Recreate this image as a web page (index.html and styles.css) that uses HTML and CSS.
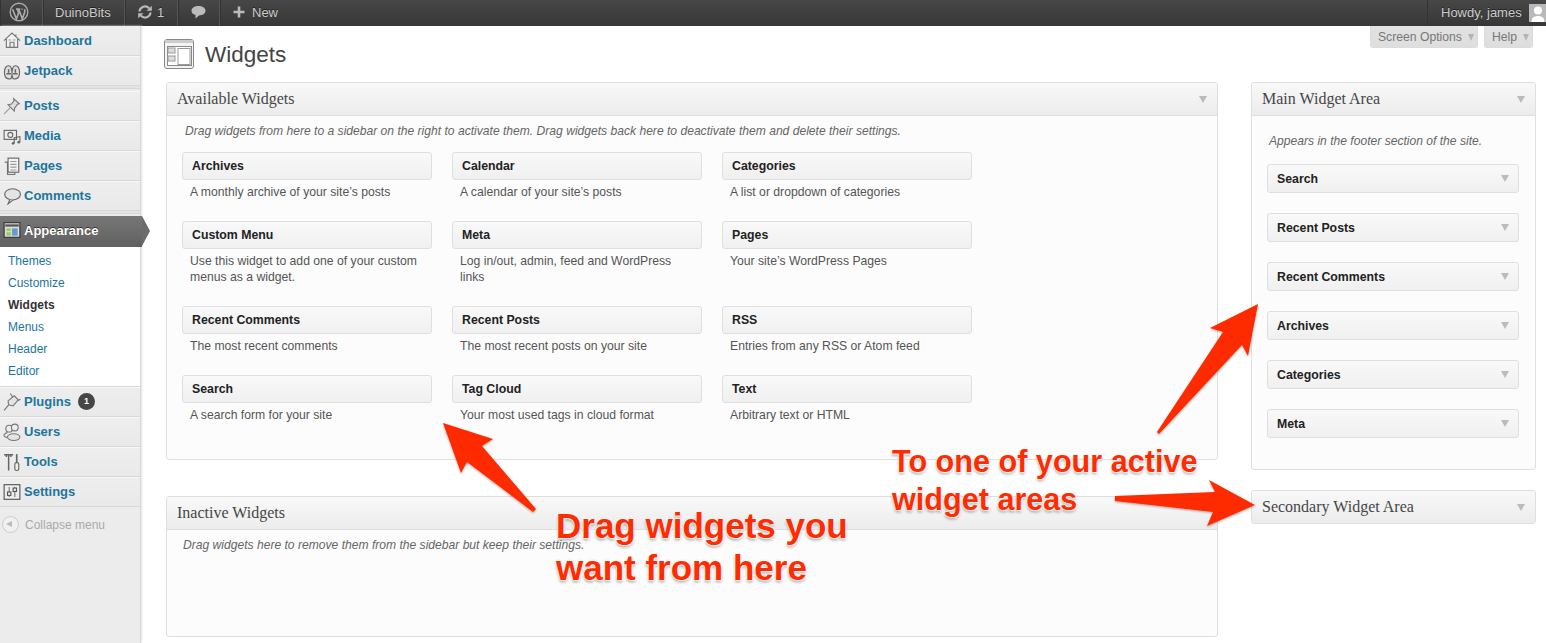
FILE: index.html
```html
<!DOCTYPE html>
<html lang="en">
<head>
  <meta charset="UTF-8">
  <title>Widgets ‹ DuinoBits — WordPress</title>
  <link rel="stylesheet" href="styles.css">
</head>
<body>
  <!-- Admin bar -->
  <header class="adminbar">
    <div class="bar-item bar-logo">
      <svg width="20" height="20" viewBox="0 0 20 20"><circle cx="10" cy="10" r="8.8" fill="none" stroke="#aaa" stroke-width="1.4"/><path d="M3.6 7.2 7.4 17l2.2-6.2-1.2-3.5M7 7.2h4.2M9.8 7.2 13.3 17l2.3-6.6c.6-1.6.3-2.4-.3-3.2M12.5 7.2h1" fill="none" stroke="#aaa" stroke-width="1.7"/></svg>
    </div>
    <div class="bar-item bar-site">DuinoBits</div>
    <div class="bar-item bar-updates">
      <svg width="16" height="14" viewBox="0 0 16 14"><path d="M2.5 6.5A5.5 5.5 0 0 1 12 3.2M13.5 7.5A5.5 5.5 0 0 1 4 10.8" fill="none" stroke="#bbb" stroke-width="2.2"/><path d="M9.5 5.8h5.3V.8zM6.5 8.2H1.2v5z" fill="#bbb"/></svg>
      <span>1</span>
    </div>
    <div class="bar-item bar-comments">
      <svg width="15" height="14" viewBox="0 0 15 14"><path d="M7.5 1C11.3 1 14.5 3 14.5 5.8S11.3 10.5 8 10.5L4.5 13.5V10C2 9.4.5 7.8.5 5.8.5 3 3.7 1 7.5 1z" fill="#bbb"/></svg>
    </div>
    <div class="bar-item bar-new">
      <svg width="12" height="12" viewBox="0 0 12 12"><path d="M6 .5v11M.5 6h11" stroke="#bbb" stroke-width="2.6"/></svg>
      <span>New</span>
    </div>
    <div class="bar-item bar-account">
      <span>Howdy, james</span>
      <div class="avatar">
        <svg width="18" height="18" viewBox="0 0 18 18"><rect width="18" height="18" fill="#b9b9b9"/><circle cx="9" cy="6.5" r="4" fill="#fff"/><path d="M2.5 18c0-4.5 3-6 6.5-6s6.5 1.5 6.5 6z" fill="#fff"/></svg>
      </div>
    </div>
  </header>

  <div class="layout">
    <!-- Left menu -->
    <nav class="sidemenu">
      <a class="menu-item">
        <svg class="menu-icon" viewBox="0 0 16 16"><path d="M.8 8.5 8 1.8l7.2 6.7M3 7v7.5H13V7M6.200 14.5V10H9.8V14.5M11.5 3V5.5" fill="#f2f2f2" stroke="#777"/><path d="M5 8h2M9 8h2" stroke="#999"/></svg>
        Dashboard
      </a>
      <a class="menu-item">
        <svg class="menu-icon" viewBox="0 0 16 16"><path d="M2 13C.5 9 1.5 4 4 3.5S7 4 7.5 6 8 12 7.5 14 3 15 2 13zM14 13c1.5-4 .5-9-2-9.5S9 4 8.5 6 8 12 8.5 14 13 15 14 13z" fill="#ddd" stroke="#666"/><path d="M5 6.5v3M11 6.5v3M3 10.5h4M9 10.5h4" stroke="#666" stroke-width="1.3"/></svg>
        Jetpack
      </a>
      <div class="menu-sep"></div>
      <a class="menu-item">
        <svg class="menu-icon" viewBox="0 0 16 16"><path d="M9.500 1.500 14.500 6 12.800 6.500 10.300 10 10 12.500 4.500 7 7.500 6.300 9.800 3.500z" fill="#ddd" stroke="#777"/><path d="M6.5 9.5 1 15" stroke="#999"/></svg>
        Posts
      </a>
      <a class="menu-item">
        <svg class="menu-icon" viewBox="0 0 16 16"><rect x="1" y="3" width="11" height="8" fill="#eee" stroke="#666"/><circle cx="6.5" cy="7" r="2.2" fill="none" stroke="#666"/><path d="M10 14.5V9.5L15 8.500V13.5" fill="none" stroke="#666"/><circle cx="9" cy="14.5" r="1.2" fill="#666"/><circle cx="14" cy="13.5" r="1.2" fill="#666"/></svg>
        Media
      </a>
      <a class="menu-item">
        <svg class="menu-icon" viewBox="0 0 16 16"><path d="M1.5 4.5H4V15.5H10.5V13" fill="#ddd" stroke="#777"/><rect x="4.5" y="1" width="9.5" height="12.5" fill="#f4f4f4" stroke="#666"/><path d="M6.5 4h5.5M6.5 6.5h5.500M6.5 9h5.5M6.5 11.5h5.5" stroke="#999"/></svg>
        Pages
      </a>
      <a class="menu-item">
        <svg class="menu-icon" viewBox="0 0 16 16"><ellipse cx="8.5" cy="6.5" rx="7" ry="5" fill="#e4e4e4" stroke="#666"/><path d="M6 11.3 4.500 15 9 11.400" fill="#e4e4e4" stroke="#666"/></svg>
        Comments
      </a>
      <div class="menu-sep"></div>
      <a class="menu-item is-current">
        <svg class="menu-icon" viewBox="0 0 16 16"><rect x="1" y="1.5" width="14" height="13" fill="#ddd" stroke="#333"/><rect x="2" y="3" width="12" height="2" fill="#555"/><rect x="3" y="6.5" width="4" height="2.500" fill="#9c6"/><rect x="3" y="10" width="4" height="3" fill="#9c6"/><rect x="8" y="6.5" width="5" height="6.5" fill="#69c"/></svg>
        Appearance
      </a>
      <ul class="submenu">
        <li>Themes</li>
        <li>Customize</li>
        <li class="active">Widgets</li>
        <li>Menus</li>
        <li>Header</li>
        <li>Editor</li>
      </ul>
      <a class="menu-item">
        <svg class="menu-icon" viewBox="0 0 16 16"><path d="M5 10.5 4.5 7 10 2.5 13.5 6 9 11.5zM1 15.5 5 10.5M8.5 3.5 6.5 .5M12.5 7 15.5 5.5" fill="#e4e4e4" stroke="#777"/></svg>
        Plugins <span class="count">1</span>
      </a>
      <a class="menu-item">
        <svg class="menu-icon" viewBox="0 0 16 16"><circle cx="5.5" cy="5" r="3" fill="#eee" stroke="#777"/><circle cx="10.5" cy="4" r="3" fill="#eee" stroke="#777"/><ellipse cx="9.5" cy="12.5" rx="5.5" ry="3" fill="#e4e4e4" stroke="#777"/><path d="M3.5 13C1.5 12.5.5 11.5 1 10.5S3 8.5 4 8.5" fill="none" stroke="#777"/></svg>
        Users
      </a>
      <a class="menu-item">
        <svg class="menu-icon" viewBox="0 0 16 16"><path d="M1 1.5h8M5 1.5V15.5M3 3.5V1.5M7 3.5V1.5" fill="none" stroke="#666" stroke-width="1.3"/><rect x="10.5" y="8.5" width="3.5" height="7" rx="1.5" fill="#eee" stroke="#666"/><path d="M12.2 8V1" stroke="#666" stroke-width="1.5"/></svg>
        Tools
      </a>
      <a class="menu-item">
        <svg class="menu-icon" viewBox="0 0 16 16"><rect x="1" y="1.5" width="14" height="13" fill="#eee" stroke="#555"/><path d="M5.5 3.5v9M10.5 3.5v9" stroke="#777"/><rect x="4" y="8" width="3" height="3" fill="#eee" stroke="#555"/><rect x="9" y="4.5" width="3" height="3" fill="#eee" stroke="#555"/></svg>
        Settings
      </a>
      <a class="menu-collapse">
        <span class="collapse-btn"></span>
        Collapse menu
      </a>
    </nav>

    <!-- Page body -->
    <main class="wrap">
      <div class="screen-meta">
        <div class="meta-tab">Screen Options<i class="caret"></i></div>
        <div class="meta-tab">Help<i class="caret"></i></div>
      </div>

      <div class="page-title">
        <svg width="32" height="32" viewBox="0 0 32 32"><rect x=".5" y=".5" width="29" height="29" rx="2.5" fill="#f4f4f4" stroke="#888"/><rect x="1" y="1" width="28" height="3" fill="#ccc"/><rect x="3.5" y="7.5" width="24" height="19" fill="#fff" stroke="#888"/><rect x="4" y="9" width="7" height="5" fill="#ddd" stroke="#999"/><rect x="4" y="17" width="7" height="5" fill="#ddd" stroke="#999"/><rect x="14" y="9.5" width="12" height="16" fill="#fff" stroke="#999"/></svg>
        <h1>Widgets</h1>
      </div>

      <div class="columns">
        <div class="col-left">
          <section class="panel panel-available">
            <h3 class="panel-head">Available Widgets<i class="caret"></i></h3>
            <div class="panel-body">
              <p class="hint">Drag widgets from here to a sidebar on the right to activate them. Drag widgets back here to deactivate them and delete their settings.</p>
              <div class="widget-grid">
                <div class="widget"><div class="tile">Archives</div><p>A monthly archive of your site’s posts</p></div>
                <div class="widget"><div class="tile">Calendar</div><p>A calendar of your site’s posts</p></div>
                <div class="widget"><div class="tile">Categories</div><p>A list or dropdown of categories</p></div>
                <div class="widget"><div class="tile">Custom Menu</div><p>Use this widget to add one of your custom menus as a widget.</p></div>
                <div class="widget"><div class="tile">Meta</div><p>Log in/out, admin, feed and WordPress links</p></div>
                <div class="widget"><div class="tile">Pages</div><p>Your site’s WordPress Pages</p></div>
                <div class="widget"><div class="tile">Recent Comments</div><p>The most recent comments</p></div>
                <div class="widget"><div class="tile">Recent Posts</div><p>The most recent posts on your site</p></div>
                <div class="widget"><div class="tile">RSS</div><p>Entries from any RSS or Atom feed</p></div>
                <div class="widget"><div class="tile">Search</div><p>A search form for your site</p></div>
                <div class="widget"><div class="tile">Tag Cloud</div><p>Your most used tags in cloud format</p></div>
                <div class="widget"><div class="tile">Text</div><p>Arbitrary text or HTML</p></div>
              </div>
            </div>
          </section>

          <section class="panel panel-inactive">
            <h3 class="panel-head">Inactive Widgets</h3>
            <div class="panel-body">
              <p class="hint hint-inactive">Drag widgets here to remove them from the sidebar but keep their settings.</p>
            </div>
          </section>
        </div>

        <aside class="col-right">
          <section class="panel panel-main">
            <h3 class="panel-head">Main Widget Area<i class="caret"></i></h3>
            <div class="panel-body">
              <p class="hint">Appears in the footer section of the site.</p>
              <div class="area-list">
                <div class="tile">Search<i class="caret"></i></div>
                <div class="tile">Recent Posts<i class="caret"></i></div>
                <div class="tile">Recent Comments<i class="caret"></i></div>
                <div class="tile">Archives<i class="caret"></i></div>
                <div class="tile">Categories<i class="caret"></i></div>
                <div class="tile">Meta<i class="caret"></i></div>
              </div>
            </div>
          </section>
          <section class="panel">
            <h3 class="panel-head">Secondary Widget Area<i class="caret"></i></h3>
          </section>
        </aside>
      </div>
    </main>
  </div>

  <!-- Red annotations drawn over the screenshot -->
  <svg class="arrows" width="1546" height="643" viewBox="0 0 1546 643">
    <defs>
      <filter id="arrow-shadow" x="-20%" y="-20%" width="140%" height="140%">
        <feDropShadow dx="0" dy="1" stdDeviation="1.2" flood-color="#000" flood-opacity=".35"/>
      </filter>
    </defs>
    <g fill="#fe2c00" filter="url(#arrow-shadow)">
      <polygon points="443,423 493,439 482,446 536,509 533,512 467,462 461,473"/>
      <polygon points="1258,304 1210,328 1223,332 1157,432 1159,434 1242,345 1248,356"/>
      <polygon points="1115,496 1215,492 1209,480 1255,505 1207,526 1213,512 1115,501"/>
    </g>
  </svg>
  <div class="note note-drag">Drag widgets you<br>want from here</div>
  <div class="note note-drop">To one of your active<br>widget areas</div>
</body>
</html>
```

FILE: styles.css
```css
html, body {
  margin: 0;
  height: 643px;
  overflow: hidden;
}
body {
  position: relative;
  background: #fff;
  font-family: "Liberation Sans", Arial, sans-serif;
  font-size: 12px;
  color: #333;
}
p, h1, h3, ul {
  margin: 0;
  padding: 0;
}

/* Admin bar */
.adminbar {
  display: flex;
  height: 26px;
  background: linear-gradient(#474747, #373737);
  color: #ccc;
  font-size: 13px;
  white-space: nowrap;
  text-shadow: 0 -1px 0 #222;
}
.bar-item {
  display: flex;
  align-items: center;
  gap: 4px;
  box-sizing: border-box;
  padding-bottom: 2px;
  border-right: 1px solid #555;
  box-shadow: 1px 0 0 #333 inset;
}
.bar-logo {
  width: 43px;
  padding-left: 9px;
  padding-bottom: 3px;
}
.bar-site { width: 82px; padding-left: 12px; }
.bar-updates { width: 53px; padding-left: 12px; }
.bar-comments { width: 42px; padding-left: 13px; }
.bar-new {
  gap: 7px;
  padding-left: 13px;
  border-right: 0;
}
.bar-account {
  margin-left: auto;
  width: 119px;
  gap: 7px;
  padding-left: 13px;
  border-right: 0;
  border-left: 1px solid #333;
  box-shadow: none;
}
.avatar {
  display: flex;
  margin-top: 2px;
}

/* Layout */
.layout {
  display: flex;
  height: 617px;
}

/* Left menu */
.sidemenu {
  flex: 0 0 141px;
  min-width: 0;
  box-sizing: border-box;
  background: #ececec;
  border-right: 1px solid #d8d8d8;
  box-shadow: 1px 0 2px #e4e4e4;
  margin-right: 2px;
}
.menu-item {
  position: relative;
  display: flex;
  align-items: center;
  height: 30px;
  box-sizing: border-box;
  padding: 0 0 1px 3px;
  border-top: 1px solid #f8f8f8;
  border-bottom: 1px solid #d8d8d8;
  background: linear-gradient(#eeeeee, #e9e9e9);
  color: #21759b;
  font-weight: bold;
  font-size: 13px;
}
.menu-item:first-child { border-top: 0; }
.menu-icon {
  flex: none;
  width: 18px;
  height: 18px;
  margin-right: 3px;
}
.menu-sep {
  height: 2px;
  margin-bottom: 2px;
  border-bottom: 1px solid #d8d8d8;
  background: #e4e4e4;
}
.is-current {
  width: 142px;
  height: 31px;
  margin-right: -1px;
  padding-bottom: 3px;
  background: linear-gradient(#777, #606060);
  border: 0;
  color: #fff;
  text-shadow: 0 -1px 0 #333;
}
.is-current::after {
  content: "";
  position: absolute;
  left: 142px;
  top: 0;
  border-left: 8px solid #6c6c6c;
  border-top: 15px solid transparent;
  border-bottom: 15px solid transparent;
}
.submenu {
  list-style: none;
  background: #fff;
  padding: 4px 0 3px;
  border-bottom: 1px solid #d8d8d8;
}
.submenu li {
  height: 22px;
  line-height: 21px;
  padding-left: 8px;
  color: #21759b;
}
.submenu .active {
  color: #333;
  font-weight: bold;
}
.count {
  display: inline-block;
  width: 17px;
  height: 17px;
  line-height: 17px;
  margin-left: 7px;
  border-radius: 50%;
  background: #464646;
  color: #fff;
  font-size: 9px;
  text-align: center;
}
.menu-collapse {
  display: flex;
  align-items: center;
  gap: 6px;
  padding: 9px 0 0 2px;
  color: #aaa;
}
.collapse-btn {
  position: relative;
  width: 15px;
  height: 15px;
  border: 1px solid #ccc;
  border-radius: 50%;
  background: #f0f0f0;
}
.collapse-btn::after {
  content: "";
  position: absolute;
  left: 3px;
  top: 4px;
  border-right: 6px solid #bbb;
  border-top: 3px solid transparent;
  border-bottom: 3px solid transparent;
}

/* Page body */
.wrap {
  position: relative;
  flex: 1;
  min-width: 0;
}
.screen-meta {
  display: flex;
  justify-content: flex-end;
  gap: 6px;
  height: 22px;
  padding-right: 13px;
}
.meta-tab {
  display: flex;
  align-items: center;
  height: 22px;
  box-sizing: border-box;
  padding: 0 3px 0 7px;
  background: linear-gradient(#e2e2e2, #dedede);
  border: 1px solid #dcdcdc;
  border-top: 0;
  border-radius: 0 0 3px 3px;
  font-size: 12.2px;
  color: #777;
}
.meta-tab .caret {
  margin: 1px 0 0 6px;
  border-left-width: 3.5px;
  border-right-width: 3.5px;
  border-top-color: #b4b4b4;
}
.caret {
  display: inline-block;
  width: 0;
  height: 0;
  border-left: 4px solid transparent;
  border-right: 4px solid transparent;
  border-top: 7px solid #bbb;
}
.page-title {
  display: flex;
  align-items: center;
  gap: 9px;
  padding: 0 0 0 21px;
  margin: -15px 0 5px;
  height: 44px;
}
.page-title h1 {
  font-size: 22.5px;
  font-weight: normal;
  color: #444;
}

/* Columns */
.columns {
  display: flex;
  gap: 33px;
  padding: 0 10px 0 23px;
}
.col-left {
  flex: 0 0 1052px;
}
.col-right {
  flex: 0 0 285px;
}
.panel {
  box-sizing: border-box;
  background: #fcfcfc;
  border: 1px solid #dfdfdf;
  border-radius: 3px;
}
.panel-available { height: 378px; }
.panel-inactive { height: 141px; margin-top: 36px; }
.panel-main { height: 388px; margin-bottom: 20px; }
.panel-head {
  display: flex;
  align-items: center;
  justify-content: space-between;
  height: 32px;
  box-sizing: border-box;
  padding: 0 10px;
  background: linear-gradient(#f9f9f9, #ececec);
  border-radius: 3px 3px 0 0;
  font-family: "Liberation Serif", Georgia, serif;
  font-size: 16px;
  font-weight: normal;
  color: #464646;
}
.panel-body {
  border-top: 1px solid #dfdfdf;
  padding: 0 15px;
}
.hint {
  padding: 7px 3px 0;
  font-size: 12.1px;
  line-height: 16px;
  font-style: italic;
  color: #666;
}
.hint-inactive { padding: 7px 1px 0; }
.panel-main .hint { padding: 17px 2px 0; }

/* Widget tiles */
.widget-grid {
  display: grid;
  grid-template-columns: repeat(3, 250px);
  grid-template-rows: 69px 85px 69px 69px;
  column-gap: 20px;
  margin-top: 13px;
}
.tile {
  display: flex;
  align-items: center;
  justify-content: space-between;
  box-sizing: border-box;
  height: 28px;
  padding: 0 9px;
  background: linear-gradient(#f9f9f9, #f0f0f0);
  border: 1px solid #dfdfdf;
  border-radius: 3px;
  font-size: 12.3px;
  font-weight: bold;
  color: #222;
}
.widget p {
  padding: 4px 8px 0;
  font-size: 12.2px;
  line-height: 16px;
  color: #555;
}
.area-list {
  display: grid;
  gap: 20px;
  margin: 15px 1px 0 0;
}
.area-list .tile {
  height: 29px;
}

/* Annotations */
.arrows {
  position: absolute;
  left: 0;
  top: 0;
  pointer-events: none;
}
.note {
  position: absolute;
  font-weight: bold;
  color: #fe2c00;
  text-shadow: 0 0 2px #fff, 0 0 2px #fff, 1px 1px 2px #fff, 0 2px 3px rgba(0, 0, 0, .45);
}
.note-drag {
  left: 556px;
  top: 505px;
  font-size: 35px;
  line-height: 42px;
}
.note-drop {
  left: 892px;
  top: 442px;
  font-size: 30.6px;
  line-height: 38px;
}
```
